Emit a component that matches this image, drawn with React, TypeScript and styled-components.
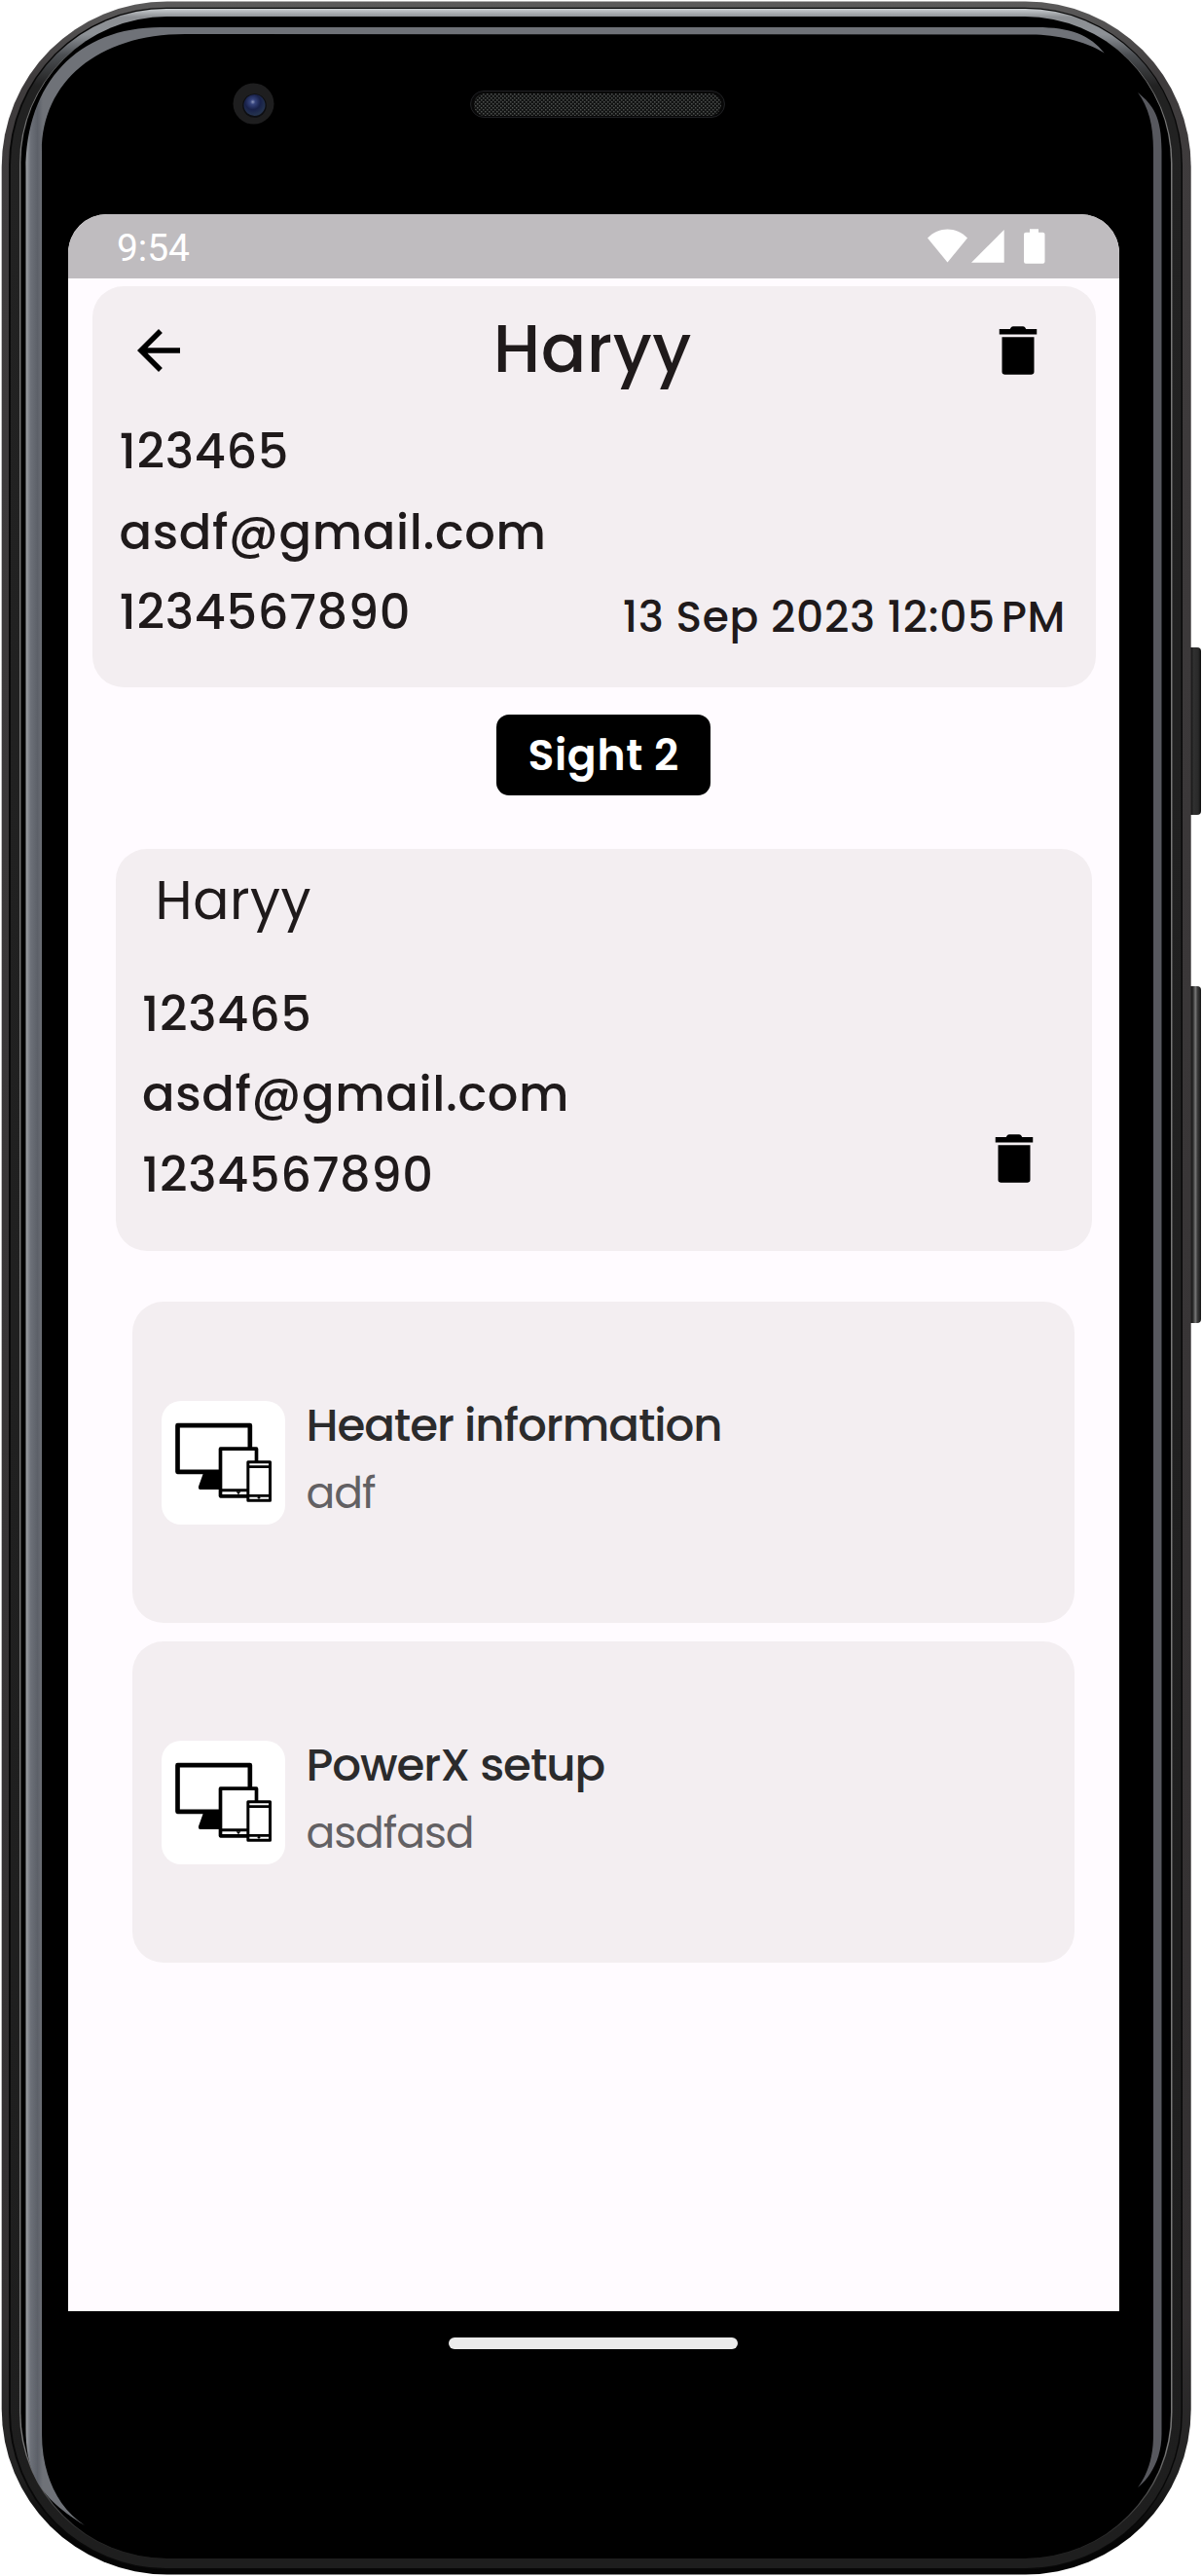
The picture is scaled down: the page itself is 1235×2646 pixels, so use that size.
import React from 'react';
import styled, { createGlobalStyle } from 'styled-components';

const GlobalStyle = createGlobalStyle`
  * { box-sizing: border-box; }
  body { margin: 0; background: #fff; }
`;

const Device = styled.div`
  position: relative;
  width: 1235px;
  height: 2646px;
  padding-left: 70px;
  overflow: hidden;
  font-family: Poppins, Inter, 'Open Sans', sans-serif;
  color: #1f1a1b;
`;

const FrameArt = styled.svg`
  position: absolute;
  inset: 0;
`;

const Forehead = styled.div`
  height: 220px;
`;

const Screen = styled.main`
  position: relative;
  width: 1080px;
  height: 2154px;
  display: flex;
  flex-direction: column;
  background: #fffbff;
  border-radius: 40px 40px 0 0;
  overflow: hidden;
`;

const StatusBar = styled.div`
  flex: none;
  height: 66px;
  display: flex;
  align-items: center;
  justify-content: space-between;
  padding: 0 76px 0 50px;
  background: #bfbcbf;
`;

const Clock = styled.span`
  padding-top: 3px;
  font: 400 39px/66px Roboto, sans-serif;
  letter-spacing: -0.1px;
  color: #fff;
`;

const Content = styled.div`
  display: flex;
  flex-direction: column;
  padding: 8px 24px 0 24.5px;
`;

const Card = styled.section`
  background: #f3eef1;
  border-radius: 32px;
`;

const ProfileCard = styled(Card)`
  height: 412px;
  padding: 33px 31px 0 28px;
`;

const Header = styled.header`
  height: 66px;
  display: grid;
  grid-template-columns: 120px 1fr 120px;
  align-items: center;
  margin-bottom: 30px;
`;

const BackSlot = styled.div`
  display: flex;
  padding-left: 7px;
`;

const DeleteSlot = styled.div`
  display: flex;
  justify-content: flex-end;
  padding-right: 16px;
`;

const Title = styled.h1`
  margin: -4px 0 0;
  text-align: center;
  font-size: 68.75px;
  line-height: 66px;
  font-weight: 500;
  letter-spacing: 0.5px;
`;

const Row = styled.div`
  display: flex;
  justify-content: space-between;
`;

const Line = styled.p`
  margin: 0;
  font-size: 49.5px;
  line-height: 82.5px;
  font-weight: 500;
  letter-spacing: 0.65px;
  white-space: nowrap;
`;

const Stamp = styled.time`
  margin-top: 5px;
  font-size: 44px;
  line-height: 82.5px;
  font-weight: 500;
  letter-spacing: 0.62px;
  white-space: nowrap;
`;

const Meridiem = styled.span`
  margin-left: -6px;
`;

const SiteButton = styled.button`
  align-self: center;
  width: 220px;
  height: 83px;
  margin: 28px 0 55px 20px;
  padding: 0;
  border: 0;
  border-radius: 13px;
  background: #000;
  color: #fff;
  font: inherit;
  font-size: 44px;
  font-weight: 600;
  letter-spacing: 0.7px;
`;

const ContactCard = styled(Card)`
  height: 412.5px;
  margin: 0 4px 0 24px;
  padding: 19px 47px 0 27.5px;
`;

const ContactName = styled.h2`
  margin: 0 0 41.5px 13.5px;
  font-size: 55px;
  line-height: 68px;
  font-weight: 400;
  letter-spacing: 0.6px;
`;

const DeleteContact = styled.div`
  display: flex;
  margin-top: -9px;
`;

const DeviceList = styled.div`
  display: flex;
  flex-direction: column;
  gap: 19px;
  margin: 52.5px 22px 0 41.5px;
`;

const DeviceCard = styled(Card)`
  height: 330px;
  display: flex;
  align-items: center;
  gap: 21.5px;
  padding-left: 30px;
`;

const Thumb = styled.div`
  width: 127px;
  height: 127px;
  border-radius: 20px;
  background: #fff;
`;

const DeviceText = styled.div`
  display: flex;
  flex-direction: column;
  padding-bottom: 7.5px;
  letter-spacing: -1.05px;
`;

const DeviceName = styled.h3`
  margin: 0;
  font-size: 46.75px;
  line-height: 70px;
  font-weight: 500;
  color: #2b2b2c;
`;

const DeviceNote = styled.p`
  margin: 0;
  font-size: 44px;
  line-height: 69px;
  font-weight: 400;
  color: #626063;
`;

const Chin = styled.footer`
  position: relative;
  width: 1080px;
  display: flex;
  justify-content: center;
  padding: 27px 1px 0 0;
`;

const HomePill = styled.div`
  width: 297px;
  height: 11.5px;
  border-radius: 6px;
  background: #ebebeb;
`;

function PhoneFrame() {
  return (
    <FrameArt width="1235" height="2646" viewBox="0 0 1235 2646" aria-hidden="true">
      <defs>
        <linearGradient id="shell" gradientUnits="userSpaceOnUse" x1="0" y1="0" x2="0" y2="2646">
          <stop offset="0" stopColor="#5c5b5b" />
          <stop offset="0.03" stopColor="#3f3c3d" />
          <stop offset="0.9" stopColor="#333031" />
          <stop offset="0.96" stopColor="#222" />
          <stop offset="0.985" stopColor="#050505" />
        </linearGradient>
        <linearGradient id="chrome" gradientUnits="userSpaceOnUse" x1="0" y1="9" x2="0" y2="2640">
          <stop offset="0" stopColor="#c9cdd0" />
          <stop offset="0.0033" stopColor="#8c8f93" />
          <stop offset="0.01" stopColor="#8d9196" />
          <stop offset="0.018" stopColor="#4c4f53" />
          <stop offset="0.03" stopColor="#222" />
          <stop offset="1" stopColor="#1e1e1e" />
        </linearGradient>
        <linearGradient id="edge" gradientUnits="userSpaceOnUse" x1="0" y1="0" x2="0" y2="2646">
          <stop offset="0" stopColor="#777" />
          <stop offset="0.95" stopColor="#777" />
          <stop offset="0.985" stopColor="#2a2a2a" />
        </linearGradient>
        <linearGradient id="glint" gradientUnits="userSpaceOnUse" x1="26" y1="0" x2="44" y2="0">
          <stop offset="0" stopColor="#a3a6aa" />
          <stop offset="0.3" stopColor="#6d7179" />
          <stop offset="0.7" stopColor="#5c6068" />
          <stop offset="1" stopColor="#6f7278" />
        </linearGradient>
        <linearGradient id="key" x1="0" y1="0" x2="1" y2="0">
          <stop offset="0.25" stopColor="#0d0d0d" />
          <stop offset="0.5" stopColor="#303030" />
          <stop offset="0.8" stopColor="#2a2a2a" />
          <stop offset="1" stopColor="#0c0c0c" />
        </linearGradient>
        <linearGradient id="keyBright" x1="0" y1="0" x2="1" y2="0">
          <stop offset="0.25" stopColor="#0d0d0d" />
          <stop offset="0.45" stopColor="#2c2c2c" />
          <stop offset="0.62" stopColor="#777" />
          <stop offset="0.75" stopColor="#3c3c3c" />
          <stop offset="1" stopColor="#151515" />
        </linearGradient>
        <radialGradient id="lens" cx="0.42" cy="0.35" r="0.6">
          <stop offset="0" stopColor="#8d97bd" />
          <stop offset="0.2" stopColor="#35437c" />
          <stop offset="0.6" stopColor="#182149" />
          <stop offset="1" stopColor="#24324e" />
        </radialGradient>
        <pattern id="mesh" width="4" height="4" patternUnits="userSpaceOnUse">
          <rect width="4" height="4" fill="#121313" />
          <rect x="0" y="0" width="1.5" height="1.5" fill="#4e514f" />
          <rect x="2" y="2" width="1.5" height="1.5" fill="#4e514f" />
        </pattern>
      </defs>
      <rect x="1219" y="665" width="15" height="172" rx="4" fill="url(#key)" />
      <rect x="1219" y="1013" width="15" height="346" rx="4" fill="url(#keyBright)" />
      <rect x="1.7" y="1.5" width="1222" height="2643" rx="170" fill="url(#shell)" />
      <rect x="9" y="7.7" width="1206" height="2632" rx="162" fill="#080808" />
      <rect x="11" y="9" width="1202.5" height="2629" rx="160" fill="url(#chrome)" />
      <rect x="20" y="18" width="1184.5" height="2610" rx="150" fill="url(#edge)" />
      <rect x="21.4" y="17" width="1181.6" height="2611" rx="150" fill="#000" />
      <path
        d="M87 2594C45 2568 26.5 2545 26.5 2495V175C26.5 85 80 28 165 28H1065C1100 28 1120 36 1134.7 54.5C1115 42 1085 35.5 1060 35.5L190 35C100 35 43 85 43 155V2500C43 2540 58 2575 87 2594Z"
        fill="url(#glint)"
      />
      <path
        d="M1169 95C1185 108 1193.5 120 1193.5 155V2500C1193.5 2523 1184 2543 1169 2555C1180 2540 1185 2523 1185 2500V155C1185 128 1180 110 1169 95Z"
        fill="#57585e"
      />
      <circle cx="260.5" cy="106.5" r="21" fill="#1e1e1f" />
      <circle cx="261.5" cy="108.5" r="12.3" fill="#0d0e12" />
      <circle cx="261.5" cy="108" r="11" fill="url(#lens)" />
      <rect x="483.5" y="93.5" width="261" height="27" rx="13.5" fill="#080808" stroke="#202124" />
      <rect x="487" y="96" width="254" height="23" rx="11.5" fill="url(#mesh)" />
    </FrameArt>
  );
}

function StatusIcons() {
  return (
    <svg width="121" height="36" viewBox="953 235 121 36" fill="#fff">
      <path d="M953 244.5C964.5 232.5 982.5 232.5 994 244.5L973.5 269.5Z" />
      <path d="M1031.7 236V269.7H998Z" />
      <path d="M1058 235.3h9v3.5h4.5a2 2 0 0 1 2 2v28a2 2 0 0 1 -2 2h-17.5a2 2 0 0 1 -2 -2v-28a2 2 0 0 1 2 -2h4z" />
    </svg>
  );
}

const BackIcon = () => (
  <svg width="66" height="66" viewBox="0 0 24 24">
    <path d="M20 11H7.83l5.59-5.59L12 4l-8 8 8 8 1.41-1.41L7.83 13H20v-2z" />
  </svg>
);

const DeleteIcon = () => (
  <svg width="66" height="66" viewBox="0 0 24 24">
    <path d="M6 20c0 .6.5 1 1.1 1h9.8c.6 0 1.1-.4 1.1-1V7H6v13zM19 4h-4l-.4-.6Q14.3 3 13.8 3h-3.6Q9.7 3 9.4 3.4L9 4H5v2h14V4z" />
  </svg>
);

const ScreensIcon = () => (
  <svg width="127" height="127" viewBox="0 0 381 381" fill="#fff" stroke="#000" strokeLinejoin="round">
    <path d="M132 222H190V270H119Q116 270 117 264Z" fill="#000" strokeWidth="6" />
    <rect x="49.5" y="75.5" width="223" height="143" strokeWidth="14" />
    <rect x="181.5" y="147.5" width="111" height="146" strokeWidth="11" />
    <path d="M182 275H292" strokeWidth="9" />
    <path d="M230 280H244L237 289Z" fill="#000" stroke="none" />
    <rect x="266.5" y="188.5" width="68" height="118" strokeWidth="9" />
    <path d="M266 203H335M266 292H335" strokeWidth="8" />
    <circle cx="300" cy="298" r="4" fill="#000" stroke="none" />
  </svg>
);

const devices = [
  { name: 'Heater information', note: 'adf' },
  { name: 'PowerX setup', note: 'asdfasd' },
];

export default function App() {
  return (
    <Device>
      <GlobalStyle />
      <PhoneFrame />
      <Forehead />
      <Screen>
        <StatusBar>
          <Clock>9:54</Clock>
          <StatusIcons />
        </StatusBar>
        <Content>
          <ProfileCard>
            <Header>
              <BackSlot><BackIcon /></BackSlot>
              <Title>Haryy</Title>
              <DeleteSlot><DeleteIcon /></DeleteSlot>
            </Header>
            <Line>123465</Line>
            <Line>asdf@gmail.com</Line>
            <Row>
              <Line>1234567890</Line>
              <Stamp>13 Sep 2023 12:05 <Meridiem>PM</Meridiem></Stamp>
            </Row>
          </ProfileCard>
          <SiteButton>Sight 2</SiteButton>
          <ContactCard>
            <ContactName>Haryy</ContactName>
            <Line>123465</Line>
            <Line>asdf@gmail.com</Line>
            <Row>
              <Line>1234567890</Line>
              <DeleteContact><DeleteIcon /></DeleteContact>
            </Row>
          </ContactCard>
          <DeviceList>
            {devices.map((d) => (
              <DeviceCard key={d.name}>
                <Thumb><ScreensIcon /></Thumb>
                <DeviceText>
                  <DeviceName>{d.name}</DeviceName>
                  <DeviceNote>{d.note}</DeviceNote>
                </DeviceText>
              </DeviceCard>
            ))}
          </DeviceList>
        </Content>
      </Screen>
      <Chin><HomePill /></Chin>
    </Device>
  );
}
